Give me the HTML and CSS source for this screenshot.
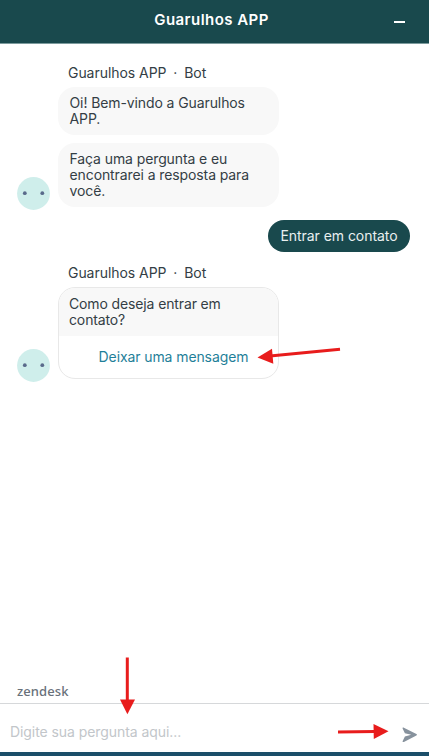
FILE: index.html
```
<!DOCTYPE html>
<html lang="pt-BR">
  <head>
    <meta charset="utf-8">
    <title>Guarulhos APP</title>
    <link rel="stylesheet" href="styles.css">
  </head>
  <body>
    <div class="chat">
      <header class="header">
        <h1>Guarulhos APP</h1>
        <button class="minimizar" aria-label="Minimizar"></button>
      </header>

      <main class="messages">
        <p class="autor">Guarulhos APP <span>·</span> Bot</p>
        <div class="grupo">
          <svg class="avatar" viewBox="0 0 33 33">
            <circle cx="16.5" cy="16.5" r="16.4" fill="#cfeeeb"/>
            <circle cx="7.8" cy="16.2" r="1.9" fill="#5a6a8b"/>
            <circle cx="25.3" cy="16.2" r="1.9" fill="#5a6a8b"/>
          </svg>
          <div class="burbujas">
            <p class="msg">Oi! Bem-vindo a Guarulhos<br>APP.</p>
            <p class="msg">Faça uma pergunta e eu<br>encontrarei a resposta para<br>você.</p>
          </div>
        </div>

        <p class="msgUsuario">Entrar em contato</p>

        <p class="autor">Guarulhos APP <span>·</span> Bot</p>
        <div class="grupo">
          <svg class="avatar" viewBox="0 0 33 33">
            <circle cx="16.5" cy="16.5" r="16.4" fill="#cfeeeb"/>
            <circle cx="7.8" cy="16.2" r="1.9" fill="#5a6a8b"/>
            <circle cx="25.3" cy="16.2" r="1.9" fill="#5a6a8b"/>
          </svg>
          <div class="card">
            <p class="cardTexto">Como deseja entrar em<br>contato?</p>
            <button class="opcao">Deixar uma mensagem</button>
          </div>
        </div>
      </main>

      <div class="marca">zendesk</div>
      <form class="form">
        <input class="input" type="text" placeholder="Digite sua pergunta aqui..." autocomplete="off">
        <button class="enviar" aria-label="Enviar">
          <svg width="16" height="16" viewBox="0 0 16 16">
            <path d="M.7 1.7C.3.7.9.2 1.9.7L14.4 7.1c.7.3.7 1 0 1.3L1.9 14.9C.9 15.4.3 14.8.7 13.9L2.9 9.4 9.2 7.8 2.9 6.2z" fill="#87929d"/>
          </svg>
        </button>
      </form>

      <!-- setas vermelhas -->
      <svg class="setas" width="429" height="756" viewBox="0 0 429 756">
        <g stroke="#e81c1c" stroke-width="3" fill="none">
          <path d="M340 349.3L270 356"/>
          <path d="M127.3 657.5V701"/>
          <path d="M338 732L375 731.5"/>
        </g>
        <g fill="#e81c1c">
          <path d="M257.5 357.5L272 348.7L273.3 363.7z"/>
          <path d="M120 699.5H135L127.4 714.3z"/>
          <path d="M373.5 724L388.5 731.2L373.8 739z"/>
        </g>
      </svg>
    </div>
  </body>
</html>
```

FILE: styles.css
```
body { margin: 0; font-family: Inter, "Liberation Sans", sans-serif; font-size: 14px; line-height: 16px; color: #343e45; background-color: #fff; }
p, h1 { margin: 0; }
button { border: none; padding: 0; background: none; font: inherit; }

.chat {
  position: relative;
  height: 756px;
  box-sizing: border-box;
  display: flex;
  flex-direction: column;
  border-bottom: 4px solid #1b4e69;
}

.header {
  height: 44px;
  flex: none;
  display: grid;
  grid-template-columns: 60px 1fr 60px;
  align-items: center;
  background-color: #19494d;
  border-bottom: 1px solid #7c9b9d;
  box-sizing: border-box;
}
.header h1 {
  grid-column: 2;
  padding-bottom: 3px;
  margin-right: 6px;
  text-align: center;
  color: #fff;
  font-size: 15px;
  font-weight: 600;
  letter-spacing: .45px;
}
.minimizar {
  width: 11px;
  height: 2px;
  margin-left: 25px;
  background-color: #fff;
}

.messages {
  flex: 1;
  display: flex;
  flex-direction: column;
  padding: 21px 19px 0 17px;
}
.autor {
  margin-left: 51px;
  margin-bottom: 6px;
  letter-spacing: -.05px;
}
.autor span { margin: 0 3px; }
.grupo {
  display: flex;
  align-items: flex-end;
  gap: 8px;
}
.avatar {
  width: 33px;
  height: 33px;
  margin-bottom: -2.5px;
}
.burbujas {
  display: flex;
  flex-direction: column;
  gap: 8px;
}
.msg {
  width: 221px;
  box-sizing: border-box;
  padding: 8px 11.5px;
  border-radius: 17px;
  letter-spacing: -.1px;
  background-color: #f8f8f8;
}
.msgUsuario {
  align-self: flex-end;
  width: 142px;
  box-sizing: border-box;
  margin: 12.5px 0 13.5px;
  padding: 8px 0;
  border-radius: 17px;
  text-align: center;
  letter-spacing: -.05px;
  color: #e9f0f0;
  background-color: #19494d;
}
.card {
  width: 221px;
  box-sizing: border-box;
  border: 1px solid #e8e8e8;
  border-radius: 17px;
  overflow: hidden;
  letter-spacing: -.13px;
}
.cardTexto {
  padding: 8px 10px;
  background-color: #f8f8f8;
}
.opcao {
  display: block;
  width: 100%;
  height: 42px;
  padding-left: 10px;
  letter-spacing: -.1px;
  color: #1f7f99;
}

.marca {
  padding: 0 17px 4px;
  font-family: "Noto Sans", sans-serif;
  font-size: 13px;
  font-weight: 500;
  letter-spacing: .1px;
  color: #68717a;
}
.form {
  height: 49px;
  flex: none;
  display: flex;
  align-items: center;
  box-sizing: border-box;
  padding: 7px 11px 0 10px;
  border-top: 1px solid #d6d8da;
}
.input {
  flex: 1;
  border: none;
  padding: 0;
  font: inherit;
  letter-spacing: -.07px;
  outline: none;
}
.input::placeholder { color: #c2c6ca; }
.enviar { height: 16px; margin-top: 7px; }
.enviar svg { display: block; }

.setas {
  position: absolute;
  top: 0;
  left: 0;
  pointer-events: none;
}
```
